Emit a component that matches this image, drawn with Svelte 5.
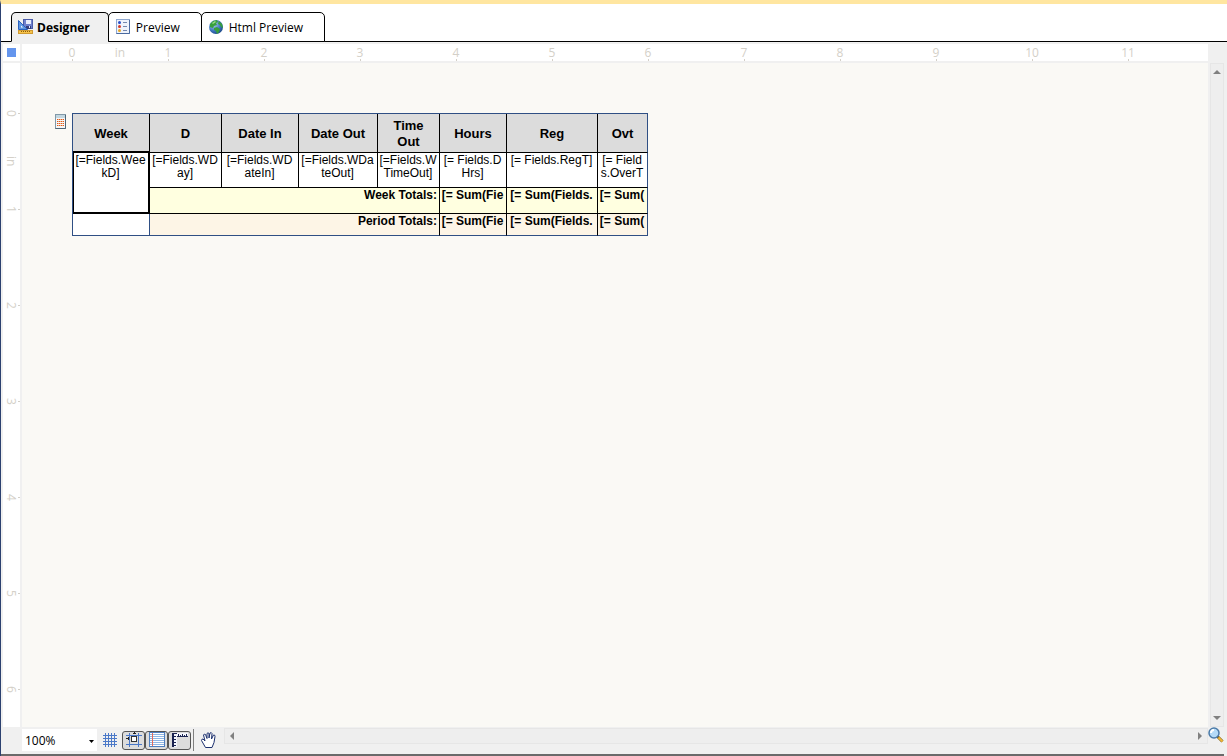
<script>
  const tabs = [
    { id: "designer", label: "Designer" },
    { id: "preview", label: "Preview" },
    { id: "html", label: "Html Preview" },
  ];
  let active = $state("designer");
  let zoom = $state("100%");

  let toggles = $state({ snap: true, lines: true, rulers: true });

  // one entry for each half inch of the ruler
  const marks = (inches) =>
    Array.from({ length: inches * 2 + 1 }, (_, i) => (i === 1 ? "in" : i % 2 ? "" : String(i / 2)));
  const across = marks(11);
  const down = marks(6);

  const columns = [
    { title: "Week", width: 77 },
    { title: "D", width: 72 },
    { title: "Date In", width: 77 },
    { title: "Date Out", width: 79 },
    { title: "Time Out", width: 62 },
    { title: "Hours", width: 67 },
    { title: "Reg", width: 91 },
    { title: "Ovt", width: 50 },
  ];

  const fields = [
    ["[=Fields.WD", "ay]"],
    ["[=Fields.WD", "ateIn]"],
    ["[=Fields.WDa", "teOut]"],
    ["[=Fields.W", "TimeOut]"],
    ["[= Fields.D", "Hrs]"],
    ["[= Fields.RegT]"],
    ["[= Field", "s.OverT"],
  ];
  const sums = ["[= Sum(Fie", "[= Sum(Fields.", "[= Sum("];
</script>

<div class="window">
  <nav class="tabs">
    {#each tabs as tab}
      <button class="tab" class:active={active === tab.id} onclick={() => (active = tab.id)}>
        {#if tab.id === "designer"}
          <svg width="16" height="16" viewBox="0 0 16 16">
            <rect x="5.5" y=".5" width="9" height="9" fill="#6f80cc" stroke="#4a5aa8" />
            <rect x="8" y="1" width="5" height="4" fill="#e8ecfb" />
            <rect x="8" y="7" width="5" height="3" fill="#333c78" />
            <rect x="11" y="7" width="1" height="2" fill="#dfe4ff" />
            <path d="M.5 1.500v9h9z" fill="#5f97e0" stroke="#2a62c0" />
            <path d="M3 6.500v2h2z" fill="#fff" />
            <rect x=".5" y="11.500" width="14" height="3" fill="#f6c34b" stroke="#d09a30" />
            <path d="M3.500 12v1M5.500 12v1M7.500 12v1M9.500 12v1M11.500 12v1" stroke="#8a5a08" />
          </svg>
        {:else if tab.id === "preview"}
          <svg width="16" height="16" viewBox="0 0 16 16">
            <rect x="1.500" y=".5" width="13" height="14" fill="#eef3fc" stroke="#8fa8d0" />
            <path d="M14.500 1v13.500H1.500" fill="none" stroke="#4a6aa0" />
            <circle cx="4.500" cy="3.500" r="1.500" fill="#2a50c8" />
            <circle cx="4.500" cy="7.500" r="1.500" fill="#d23a2a" />
            <circle cx="4.500" cy="11.500" r="1.500" fill="#e8a820" />
            <path d="M8 3.500h4M8 7.500h4M8 11.500h4" stroke="#7488ae" />
          </svg>
        {:else}
          <svg width="16" height="16" viewBox="0 0 16 16">
            <defs>
              <radialGradient id="sea" cx=".35" cy=".3" r=".8">
                <stop offset="0" stop-color="#b5d2f3" />
                <stop offset=".6" stop-color="#3c74bd" />
                <stop offset="1" stop-color="#173f7c" />
              </radialGradient>
            </defs>
            <circle cx="8" cy="8" r="7" fill="url(#sea)" />
            <path d="M2 5l3-3 4-1 1 2-2 1 1 2-3 1-1 2-3-1zM6 9l3-1 3 2-1 3-2 2-1-3-2-1zM11 2l3 3 1 4-2-1-1-2-2-1z" fill="#37a03c" />
            <path d="M4 4l3-2 1 1-3 2z" fill="#9bdc86" />
          </svg>
        {/if}
        {tab.label}
      </button>
    {/each}
  </nav>

  <div class="designer">
    <div class="corner"><i></i></div>
    <div class="ruler across">
      {#each across as mark}
        <span class:tick={mark && mark !== "in"}>{mark}</span>
      {/each}
    </div>
    <div class="ruler down">
      {#each down as mark}
        <span class:tick={mark && mark !== "in"}>{mark}</span>
      {/each}
    </div>

    <main class="canvas">
      <svg class="list-icon" width="11" height="15" viewBox="0 0 11 15">
        <rect x=".5" y=".5" width="10" height="14" fill="#f4f7f9" stroke="#8199a8" />
        <path d="M10.500 1v13.500H.5" fill="none" stroke="#4f6676" />
        <rect x="1" y="1" width="9" height="3" fill="#c3d7e0" />
        <path d="M2 5.500h7M2 7.500h7M2 9.500h7M2 11.500h7" stroke="#f3b98f" />
        <path d="M2 5.500h7M2 7.500h7M2 9.500h7M2 11.500h7" stroke="#e0581a" stroke-dasharray="1 1" />
      </svg>
      <table>
        <colgroup>
          {#each columns as column}
            <col style="width: {column.width}px" />
          {/each}
        </colgroup>
        <thead>
          <tr>
            {#each columns as column}
              <th scope="col">{column.title}</th>
            {/each}
          </tr>
        </thead>
        <tbody>
          <tr class="detail">
            <td class="selected" rowspan="2">[=Fields.Wee<br />kD]</td>
            {#each fields as lines}
              <td>{lines[0]}{#if lines[1]}<br />{lines[1]}{/if}</td>
            {/each}
          </tr>
          <tr class="total week">
            <td class="label" colspan="4">Week Totals:</td>
            {#each sums as sum}
              <td>{sum}</td>
            {/each}
          </tr>
          <tr class="total period">
            <td class="blank"></td>
            <td class="label" colspan="4">Period Totals:</td>
            {#each sums as sum}
              <td>{sum}</td>
            {/each}
          </tr>
        </tbody>
      </table>
    </main>

    <div class="scroll vertical">
      <button aria-label="Scroll up"><svg width="8" height="4" viewBox="0 0 8 4"><path d="M0 4l4-4 4 4z" /></svg></button>
      <button aria-label="Scroll down"><svg width="8" height="4" viewBox="0 0 8 4"><path d="M0 0l4 4 4-4z" /></svg></button>
    </div>
  </div>

  <footer class="bar">
    <div class="zoom">
      <select aria-label="Zoom" bind:value={zoom}>
        <option>50%</option>
        <option>100%</option>
        <option>200%</option>
      </select>
      <svg class="caret" width="5" height="3" viewBox="0 0 5 3"><path d="M0 0h5L2.500 3z" /></svg>
    </div>
    <button class="tool" aria-label="Grid">
      <svg width="16" height="16" viewBox="0 0 16 16">
        <path d="M3.500 1v14M6.500 1v14M9.500 1v14M12.500 1v14M1 3.500h14M1 6.500h14M1 9.500h14M1 12.500h14" stroke="#4a78c8" />
      </svg>
    </button>
    <div class="toggles">
      <button class="tool" class:pressed={toggles.snap} aria-label="Snap to grid" onclick={() => (toggles.snap = !toggles.snap)}>
        <svg width="16" height="16" viewBox="0 0 16 16">
          <path d="M3.500 1v14M12.500 1v14M0 3.500h16M0 12.500h16" stroke="#4a78c8" />
          <rect x="5.500" y="4.500" width="5" height="5" fill="#fff" stroke="#333" />
          <path d="M0 6.500h3M2.500 5v3M8.500 0v2M7 1.500h3" stroke="#222" />
        </svg>
      </button>
      <button class="tool" class:pressed={toggles.lines} aria-label="Lines" onclick={() => (toggles.lines = !toggles.lines)}>
        <svg width="16" height="16" viewBox="0 0 16 16">
          <rect x=".5" y=".5" width="15" height="14" fill="#fff" stroke="#4f7fc0" />
          <path d="M1 2.500h14M1 4.500h14M1 6.500h14M1 8.500h14M1 10.500h14M1 12.500h14" stroke="#8fb6e4" />
          <path d="M3.500 1v13" stroke="#e46a5c" />
        </svg>
      </button>
      <button class="tool" class:pressed={toggles.rulers} aria-label="Rulers" onclick={() => (toggles.rulers = !toggles.rulers)}>
        <svg width="16" height="16" viewBox="0 0 16 16">
          <path d="M0 1h16v4H5v10H0z" fill="#f4f6fc" />
          <path d="M1 1v14" stroke="#1a2350" stroke-width="2" />
          <path d="M1 1.500h4M1 4.500h3M1 7.500h3M1 10.500h3M1 13.500h3M5 4.500h11M6.500 2v2M8.500 3v2M10.500 2v2M12.500 3v2M14.500 2v2" stroke="#1a2350" />
        </svg>
      </button>
    </div>
    <span class="divider"></span>
    <button class="tool hand" aria-label="Pan">
      <svg width="18" height="18" viewBox="0 0 18 18">
        <path d="M5.500 16.500L1.500 9.500q0-1.500 1.500-1.500l2 2-1.500-6q.5-1.500 2-.5l1.500 4V2.500q1-1.500 2 0V7l1-5q1.500-1 2 .5L11.500 8l2-4q1.500-.5 1.500 1.500l-1 6-2 5z" fill="#fff" stroke="#1b2f6e" />
      </svg>
    </button>
    <div class="scroll horizontal">
      <button aria-label="Scroll left"><svg width="4" height="8" viewBox="0 0 4 8"><path d="M4 0L0 4l4 4z" /></svg></button>
      <button aria-label="Scroll right"><svg width="4" height="8" viewBox="0 0 4 8"><path d="M0 0l4 4-4 4z" /></svg></button>
    </div>
    <button class="tool lens" aria-label="Magnify">
      <svg width="16" height="16" viewBox="0 0 16 16">
        <path d="M9.500 9.500l5 5" stroke="#7a5a1c" stroke-width="3" />
        <path d="M10.500 10.500l4 4" stroke="#f0b93a" stroke-width="2" />
        <circle cx="6" cy="6" r="5" fill="#b4daf7" stroke="#4c7ba8" stroke-width="1.500" />
        <path d="M3 6q0-3 3-3" fill="none" stroke="#fff" stroke-width="2" />
      </svg>
    </button>
  </footer>
</div>

<style>
  :global(body) {
    margin: 0;
  }

  .window {
    box-sizing: border-box;
    display: flex;
    flex-direction: column;
    min-height: 100vh;
    border-top: 4px solid #ffe6a0;
    border-left: 1px solid #2c4170;
    background: #f0f0f0;
    font-family: "Open Sans", "Noto Sans", sans-serif;
    font-size: 12px;
    color: #000;
  }

  button {
    margin: 0;
    padding: 0;
    border: none;
    background: none;
    font: inherit;
    color: inherit;
  }

  svg {
    display: block;
    flex: none;
  }

  /* Tabs */
  .tabs {
    display: flex;
    padding: 8px 0 0 10px;
    background: linear-gradient(#000, #000) bottom / 100% 1px no-repeat #fff;
  }

  .tab {
    box-sizing: border-box;
    display: flex;
    align-items: center;
    gap: 5px;
    height: 30px;
    padding: 0 21px 0 6px;
    margin-right: -1px;
    border: 1px solid #000;
    border-radius: 5px 5px 0 0;
    background: #fff;
  }

  .tab.active {
    padding: 0 18px 0 6px;
    gap: 3px;
    border-bottom-color: #f0f0f0;
    background: #f0f0f0;
    font-weight: 700;
  }

  /* Design surface */
  .designer {
    flex: 1;
    display: grid;
    grid-template-columns: 17px 1fr 14px;
    grid-template-rows: 17px 1fr;
    gap: 2px;
    padding: 2px 3px 1px 2px;
  }

  .corner {
    display: flex;
    align-items: center;
    justify-content: center;
    background: #fff;
  }

  .corner i {
    width: 9px;
    height: 9px;
    background: #6495ed;
  }

  .ruler {
    display: flex;
    overflow: hidden;
    background: #fff;
    color: #d4d0c8;
    line-height: 17px;
  }

  .ruler span {
    flex: none;
    text-align: center;
  }

  .across {
    padding-left: 26px;
  }

  .across span {
    width: 48px;
  }

  .across .tick {
    background: linear-gradient(#d4d0c8, #d4d0c8) center bottom / 1px 2px no-repeat;
  }

  .down {
    grid-row: 2;
    grid-column: 1;
    flex-direction: column;
    padding-top: 26px;
  }

  .down span {
    height: 48px;
    writing-mode: vertical-rl;
  }

  .down .tick {
    background: linear-gradient(#d4d0c8, #d4d0c8) right center / 2px 1px no-repeat;
  }

  .canvas {
    grid-row: 2;
    grid-column: 2;
    display: flex;
    align-items: flex-start;
    gap: 6px;
    padding: 50px 0 0 33px;
    background: #faf9f5;
  }

  .list-icon {
    margin-top: 1px;
  }

  table {
    width: 576px;
    table-layout: fixed;
    border-collapse: separate;
    border-spacing: 0;
    border: 1px solid #2f4f84;
    border-width: 1px 0 0 1px;
    box-sizing: border-box;
    font-family: "Liberation Sans", Arial, sans-serif;
    line-height: 13px;
  }

  th,
  td {
    box-sizing: border-box;
    padding: 1px 2px 1px 1px;
    border: solid #000;
    border-width: 0 1px 1px 0;
    background: #fff;
    text-align: center;
    vertical-align: top;
    white-space: nowrap;
    overflow: hidden;
  }

  th {
    height: 39px;
    padding: 2px 10px 0;
    background: #dcdcdc;
    font-size: 13px;
    line-height: 16px;
    vertical-align: middle;
    white-space: normal;
  }

  tr > :last-child {
    border-right-color: #2f4f84;
  }

  .detail td {
    height: 35px;
  }

  td.selected {
    position: relative;
    box-shadow: 0 -2px #000, inset 1px 0 #000, inset -1px 0 #000, inset 0 -1px #000;
  }

  .total td {
    font-weight: 700;
  }

  .week td {
    height: 26px;
    background: #ffffe0;
  }

  .period td {
    height: 22px;
    border-bottom-color: #2f4f84;
    background: #fdf5e6;
  }

  .total .label {
    text-align: right;
  }

  .period td.blank {
    border-right-color: #2f4f84;
    background: #fff;
  }

  /* Scroll bars */
  .scroll {
    box-sizing: border-box;
    display: flex;
    justify-content: space-between;
    align-items: center;
    border: 1px solid #e6e6e6;
    background: #eeeeee;
    fill: #808080;
  }

  .vertical {
    grid-row: 2;
    grid-column: 3;
    flex-direction: column;
    padding: 6px 0;
  }

  .horizontal {
    flex: 1;
    align-self: flex-start;
    height: 16px;
    padding: 0 5px;
  }

  /* Bottom bar */
  .bar {
    display: flex;
    align-items: center;
    height: 24px;
    padding: 0 0 2px 21px;
    margin-right: 3px;
    border-bottom: 2px solid #6a6a6a;
  }

  .zoom {
    position: relative;
    width: 75px;
    margin-right: 5px;
  }

  select {
    display: block;
    width: 100%;
    height: 22px;
    padding: 0 3px;
    border: none;
    border-radius: 0;
    background: #fff;
    appearance: none;
    font: inherit;
    color: inherit;
  }

  .caret {
    position: absolute;
    right: 3px;
    top: 11px;
  }

  .toggles {
    display: flex;
    margin: 0 2px 0 4px;
  }

  .tool.pressed {
    box-sizing: border-box;
    width: 23px;
    height: 19px;
    padding: 0 3px;
    border: 1px solid #555;
    border-radius: 3px;
    background: #dcdcdc;
  }

  .divider {
    width: 1px;
    height: 22px;
    background: #808080;
  }

  .hand {
    margin: 0 6px;
  }

  .lens {
    margin-bottom: 10px;
  }
</style>
